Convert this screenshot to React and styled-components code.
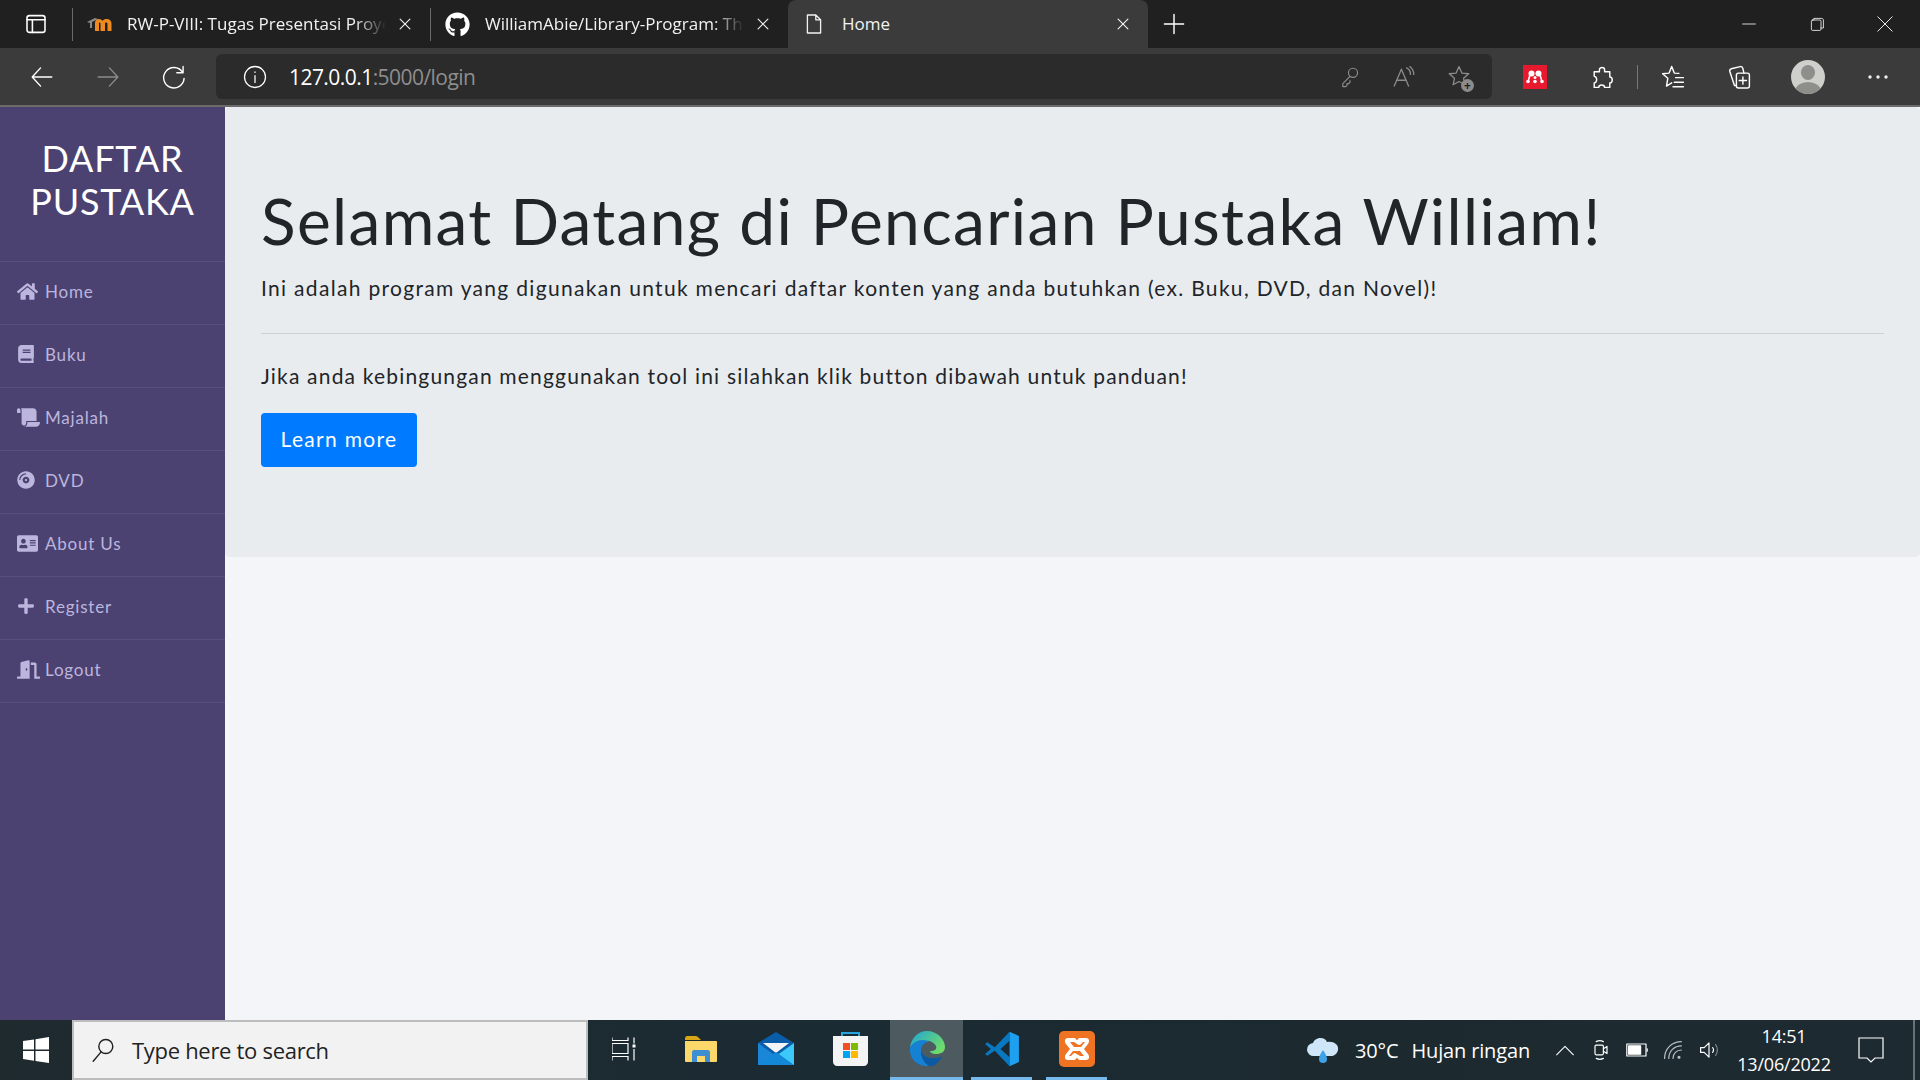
import React from 'react';
import styled, { createGlobalStyle } from 'styled-components';
import {
  FaHome,
  FaBook,
  FaScroll,
  FaCompactDisc,
  FaAddressCard,
  FaPlus,
  FaDoorOpen,
  FaGithub,
} from 'react-icons/fa';

const GlobalStyle = createGlobalStyle`
  html, body {
    margin: 0;
    padding: 0;
    height: 100%;
    overflow: hidden;
    background: #f4f5f9;
  }
  #root {
    height: 100%;
  }
  * {
    box-sizing: border-box;
  }
`;

const UI_FONT = `"Open Sans", "Noto Sans", sans-serif`;
const PAGE_FONT = `Lato, "Open Sans", sans-serif`;

const Stroke = ({ size = 20, width = 1.2, color = 'currentColor', children, ...rest }) => (
  <svg
    width={size}
    height={size}
    viewBox="0 0 20 20"
    fill="none"
    stroke={color}
    strokeWidth={width}
    strokeLinecap="round"
    strokeLinejoin="round"
    {...rest}
  >
    {children}
  </svg>
);

const CloseIcon = ({ size = 14 }) => (
  <Stroke size={size} width={1.6}>
    <path d="M3 3l14 14M17 3L3 17" />
  </Stroke>
);

const MoodleIcon = () => (
  <svg width="26" height="16" viewBox="0 0 26 16">
    <path d="M0 6l8-4 3 1-6 3v6H3V7z" fill="#8a8a8a" />
    <path
      d="M8 15V7c0-2 1-4 4-4 2 0 3 1 3.500 2 1-1.500 2.500-2 4-2 3 0 5 1.500 5 5v7h-4V8c0-1-.5-1.500-1.500-1.500S18 7 18 8v7h-4.500V8c0-1-.5-1.500-1-1.500S12 7 12 8v7z"
      fill="#ee8a1f"
    />
  </svg>
);

const navItems = [
  { label: 'Home', Icon: FaHome, size: 21 },
  { label: 'Buku', Icon: FaBook, size: 18 },
  { label: 'Majalah', Icon: FaScroll, size: 23 },
  { label: 'DVD', Icon: FaCompactDisc, size: 18 },
  { label: 'About Us', Icon: FaAddressCard, size: 21 },
  { label: 'Register', Icon: FaPlus, size: 18 },
  { label: 'Logout', Icon: FaDoorOpen, size: 23 },
];

const App = () => (
  <Screen>
    <GlobalStyle />
    <TabStrip>
      <StripIcon $width={72}>
        <Stroke size={24} width={1.3}>
          <rect x="2.5" y="3" width="15" height="14" rx="2" />
          <path d="M2.5 6.5h15M7 6.5V17" />
        </Stroke>
      </StripIcon>
      <Tab $divider>
        <TabIcon>
          <MoodleIcon />
        </TabIcon>
        <TabTitle>RW-P-VIII: Tugas Presentasi Proyek</TabTitle>
        <TabClose>
          <CloseIcon />
        </TabClose>
      </Tab>
      <Tab $divider>
        <TabIcon>
          <FaGithub size={25} color="#fff" />
        </TabIcon>
        <TabTitle>WilliamAbie/Library-Program: The</TabTitle>
        <TabClose>
          <CloseIcon />
        </TabClose>
      </Tab>
      <Tab $active>
        <TabIcon>
          <Stroke size={24} width={1.1}>
            <path d="M4.5 2.5h7l4 4v11h-11zM11.5 2.5v4h4" />
          </Stroke>
        </TabIcon>
        <TabTitle $plain>Home</TabTitle>
        <TabClose>
          <CloseIcon />
        </TabClose>
      </Tab>
      <NewTab>
        <Stroke size={24} width={1.2}>
          <path d="M10 2v16M2 10h16" />
        </Stroke>
      </NewTab>
      <WindowControls>
        <WindowButton>
          <Stroke size={16} width={1}>
            <path d="M2 10h16" />
          </Stroke>
        </WindowButton>
        <WindowButton>
          <Stroke size={16} width={1}>
            <rect x="3" y="5" width="12" height="13" rx="1.5" />
            <path d="M6 5V3h10c1 0 2 1 2 2v10h-3" />
          </Stroke>
        </WindowButton>
        <WindowButton>
          <Stroke size={18} width={1}>
            <path d="M2 2l16 16M18 2L2 18" />
          </Stroke>
        </WindowButton>
      </WindowControls>
    </TabStrip>

    <Toolbar>
      <NavButton>
        <Stroke size={28} width={1}>
          <path d="M17 10H3M9 3.5L3 10l6 6.500" />
        </Stroke>
      </NavButton>
      <NavButton $muted>
        <Stroke size={28} width={1}>
          <path d="M3 10h14M11 3.5l6 6.500-6 6.500" />
        </Stroke>
      </NavButton>
      <NavButton>
        <Stroke size={28} width={1}>
          <path d="M16 6.500A7.300 7.300 0 1 0 17.200 11M16.500 2.500v4.500H12" />
        </Stroke>
      </NavButton>
      <AddressBar>
        <InfoIcon>
          <Stroke size={28} width={0.9}>
            <circle cx="10" cy="10" r="7.500" />
            <path d="M10 9v5M10 6.300v.4" />
          </Stroke>
        </InfoIcon>
        <Url>
          127.0.0.1<UrlPath>:5000/login</UrlPath>
        </Url>
        <AddressIcons>
          <Stroke size={24} width={1}>
            <circle cx="12.500" cy="6.500" r="3.800" />
            <path d="M10 9.500l-6 6v2.500h2.500l1-1v-1.500h1.500l1-1v-1.500" />
          </Stroke>
          <Stroke size={26} width={1}>
            <path d="M2.500 17L8 4l5.500 13M4.500 12.500h7M12 3c2 1 3 3 3 5M14.500 2c2 1.500 3 3.500 3 6" />
          </Stroke>
          <FavAdd>
            <Stroke size={26} width={1}>
              <path d="M10 2l2.200 5 5.300.5-4 3.500 1 5-4.500-2.500-4.500 2.500 1-5-4-3.500 5.300-.5z" />
            </Stroke>
            <FavBadge>+</FavBadge>
          </FavAdd>
        </AddressIcons>
      </AddressBar>
      <ToolIcons>
        <Mendeley>
          <svg width="24" height="24" viewBox="0 0 24 24" fill="#fff">
            <circle cx="8.500" cy="8.500" r="3" />
            <circle cx="15.500" cy="8.500" r="3" />
            <circle cx="12" cy="12.500" r="1.500" />
            <circle cx="5" cy="16.500" r="1.800" />
            <circle cx="12" cy="16.500" r="1.800" />
            <circle cx="19" cy="16.500" r="1.800" />
            <path d="M6 10l1.500 1-1.500 5H4.500zM18 10l-1.500 1 1.500 5h1.500z" />
          </svg>
        </Mendeley>
        <ToolSlot $width={66} $gap={22}>
          <Stroke size={26} width={1.1}>
            <path d="M8 4.500C8 2 12 2 12 4.500V6h4v4c2.500 0 2.500 4.500 0 4.500V18h-4c0-2.500-4.500-2.500-4.500 0H4v-3.500c2.500 0 2.500-5 0-5V6h4z" />
          </Stroke>
        </ToolSlot>
        <ToolDivider />
        <ToolSlot $width={70}>
          <Stroke size={26} width={1.1}>
            <path d="M9 2l2 5 3.500.2M9 2L7 7l-5 .5 4 3.500-1 6 4-2.500M12 10.500h6M11 14h7M10 17.500h8" />
          </Stroke>
        </ToolSlot>
        <ToolSlot $width={62}>
          <Stroke size={26} width={1.1}>
            <rect x="8" y="7" width="10" height="11.500" rx="1.500" />
            <path d="M13 10v5.500M10.200 12.700h5.600M8 16.500H6.500L3 6c-.3-1 0-2 1-2.300L11 2c1-.2 1.700.5 2 1.500l.8 3.500" />
          </Stroke>
        </ToolSlot>
        <Avatar>
          <AvatarHead />
          <AvatarBody />
        </Avatar>
        <MoreDots>
          <svg width="20" height="4" viewBox="0 0 20 4" fill="#f0f0f0">
            <circle cx="2" cy="2" r="1.700" />
            <circle cx="10" cy="2" r="1.700" />
            <circle cx="18" cy="2" r="1.700" />
          </svg>
        </MoreDots>
      </ToolIcons>
    </Toolbar>

    <Body>
      <Sidebar>
        <Brand>DAFTAR PUSTAKA</Brand>
        <NavList>
          {navItems.map(({ label, Icon, size }) => (
            <NavItem key={label}>
              <NavIcon>
                <Icon size={size} />
              </NavIcon>
              {label}
            </NavItem>
          ))}
        </NavList>
      </Sidebar>
      <Content>
        <Jumbotron>
          <Heading>Selamat Datang di Pencarian Pustaka William!</Heading>
          <Lead>
            Ini adalah program yang digunakan untuk mencari daftar konten yang anda butuhkan (ex. Buku,
            DVD, dan Novel)!
          </Lead>
          <Rule />
          <Hint>Jika anda kebingungan menggunakan tool ini silahkan klik button dibawah untuk panduan!</Hint>
          <LearnMore>Learn more</LearnMore>
        </Jumbotron>
      </Content>
    </Body>

    <Taskbar>
      <StartButton>
        <svg width="26" height="26" viewBox="0 0 26 26" fill="#fff">
          <path d="M0 4l11-1.500V12.500H0zM12.500 2.300L26 0v12.500H12.500zM0 14h11v9.700L0 22zM12.500 14H26v12l-13.500-2z" />
        </svg>
      </StartButton>
      <SearchBox>
        <Stroke size={28} width={1} color="#1f1f1f">
          <circle cx="12" cy="7.500" r="5" />
          <path d="M8.500 11.500L3 18" />
        </Stroke>
        <SearchText>Type here to search</SearchText>
      </SearchBox>
      <TaskSlot $width={72}>
        <svg width="24" height="24" viewBox="0 0 24 24" fill="none" stroke="#fff" strokeWidth="1.200">
          <path d="M0 .5v3h16v-3M0 6.500h16v10H0zM0 23.500v-4h16v4M22 .5v6M22 10v0M22 12v11.500" />
          <rect x="20.500" y="7.500" width="3" height="3" fill="#fff" stroke="none" />
        </svg>
      </TaskSlot>
      <TaskSlot $width={82}>
        <svg width="32" height="26" viewBox="0 0 32 26">
          <path d="M0 3c0-2 1-3 2-3h9c1 0 2 1 3 2l2 2H0z" fill="#d9a416" />
          <path d="M0 5h31c.5 0 1 .5 1 1v19c0 .5-.5 1-1 1H1c-.5 0-1-.5-1-1z" fill="#fbd869" />
          <path d="M7 26V16c0-1 1-2 2-2h14c1 0 2 1 2 2v10h-5v-6h-8v6z" fill="#3d8fd4" />
        </svg>
      </TaskSlot>
      <TaskSlot $width={68}>
        <svg width="36" height="33" viewBox="0 0 36 33">
          <path d="M18 0l18 11v3L18 25 0 14v-3z" fill="#0a5da8" />
          <path d="M5 11h26L18 21z" fill="#f2f4f6" />
          <path d="M0 11l18 13v9H0z" fill="#1a86d8" />
          <path d="M36 11L18 24v9h18z" fill="#3cc8f8" />
          <path d="M0 33l18-13 18 13z" fill="#1488d8" />
        </svg>
      </TaskSlot>
      <TaskSlot $width={80}>
        <svg width="35" height="35" viewBox="0 0 35 35">
          <path d="M9 6V2h17v4" fill="none" stroke="#27a3dd" strokeWidth="2" />
          <path d="M0 5h35v26c0 2-2 4-4 4H4c-2 0-4-2-4-4z" fill="#f4f4f4" />
          <path d="M10 12h7v7h-7z" fill="#f25022" />
          <path d="M18 12h7v7h-7z" fill="#7fba00" />
          <path d="M10 20h7v7h-7z" fill="#00a4ef" />
          <path d="M18 20h7v7h-7z" fill="#ffb900" />
        </svg>
      </TaskSlot>
      <TaskSlot $width={73} $active $underline>
        <svg width="36" height="36" viewBox="0 0 36 36">
          <defs>
            <linearGradient id="edgeTop" x1="0" y1="0" x2="1" y2="0.6">
              <stop offset="0" stopColor="#1ea3d8" />
              <stop offset="1" stopColor="#6fdc6a" />
            </linearGradient>
          </defs>
          <path d="M1 17C2 7 9 0 18 0c10 0 18 8 18 16 0 5-4 7-9 7-3 0-6-1-6-3 5 0 7-2 6-5-2-4-7-6-11-5C9 11 3 13 1 17z" fill="url(#edgeTop)" />
          <path d="M1 17c2-5 7-8 13-8 3 0 5 1 6 2-5 0-8 4-8 9 0 6 3 11 8 15C10 36 0 29 1 17z" fill="#1581d2" />
          <path d="M20 35c-5-3-8-9-8-15 2 5 8 8 14 7 3 0 6-1 7-2-2 5-8 12-13 10z" fill="#0c59a4" />
        </svg>
      </TaskSlot>
      <TaskSlot $width={61} $gap={8} $underline>
        <svg width="36" height="36" viewBox="0 0 100 100">
          <path d="M3 36l6-5 21 14L71 2v25L46 50l25 23v25L30 55 9 69l-6-5 16-14z" fill="#0a78c0" />
          <path d="M71 2l26 12v72L71 98z" fill="#1ea0f0" />
        </svg>
      </TaskSlot>
      <TaskSlot $width={61} $gap={14} $underline>
        <svg width="36" height="36" viewBox="0 0 36 36">
          <rect width="36" height="36" rx="5" fill="#ee7424" />
          <path
            d="M9 7h6c2 0 2 2 3 2s1-2 3-2h6c3 0 4 3 2 6l-4 5 4 5c2 3 1 6-2 6h-6c-2 0-2-2-3-2s-1 2-3 2H9c-3 0-4-3-2-6l4-5-4-5C5 10 6 7 9 7z"
            fill="#fff"
          />
          <path d="M11 11h4c2 1 4 3 6 3l3-3h2l-4 5h-7zM25 25h-4c-2-1-4-3-6-3l-3 3h-2l4-5h7z" fill="#ee7424" />
        </svg>
      </TaskSlot>
      <Tray>
        <svg width="34" height="28" viewBox="0 0 34 28">
          <path d="M8 20a6.500 6.500 0 0 1-1-13C9 1 19 0 21 6c6-1 12 2 11 8-1 4-4 6-7 6z" fill="#cfe6f8" />
          <path d="M17 14c2 3 4 6 4 9a4 4 0 0 1-8 0c0-3 2-6 4-9z" fill="#3fa2e6" />
        </svg>
        <Weather>
          <span>30°C</span>
          <span>Hujan ringan</span>
        </Weather>
        <TrayIcons>
          <Stroke size={24} width={0.9}>
            <path d="M3 14l7-7 7 7" />
          </Stroke>
          <Stroke size={24} width={1}>
            <rect x="5" y="6" width="7" height="8" rx="1" />
            <path d="M12 9l3-2v6l-3-2M6 3c2-1 4-1 6 0M6 17c2 1 4 1 6 0" />
          </Stroke>
          <Stroke size={24} width={1}>
            <rect x="1.500" y="5" width="16" height="10" />
            <rect x="3" y="6.500" width="10" height="7" fill="#fff" />
            <path d="M18.500 9v2" />
          </Stroke>
          <Stroke size={24} width={1} color="#b9c0c4">
            <path d="M3 17C3 9 9 3 17 3M6.500 17c0-6 4.500-10.500 10.500-10.500M10 17c0-4 3-7 7-7" />
            <circle cx="15" cy="16" r="0.800" fill="#fff" />
          </Stroke>
          <Stroke size={24} width={1}>
            <path d="M3 8h3l4-4v12l-4-4H3zM13 8c1 1 1 3 0 4" />
            <path d="M15.500 5.500c2 3 2 6 0 9" stroke="#7d8588" />
          </Stroke>
        </TrayIcons>
        <Clock>
          <span>14:51</span>
          <span>13/06/2022</span>
        </Clock>
        <Notify>
          <svg width="26" height="28" viewBox="0 0 26 28" fill="none" stroke="#fff" strokeWidth="1.200">
            <path d="M1 2h24v20h-8l-4 4-4-4H1z" />
          </svg>
        </Notify>
      </Tray>
    </Taskbar>
  </Screen>
);

export default App;

const Screen = styled.div`
  width: 1920px;
  height: 1080px;
  display: flex;
  flex-direction: column;
  overflow: hidden;
  font-family: ${UI_FONT};
`;

const TabStrip = styled.div`
  height: 48px;
  flex: none;
  display: flex;
  background: #202020;
  color: #fff;
`;

const StripIcon = styled.div`
  width: ${({ $width }) => $width}px;
  display: flex;
  align-items: center;
  justify-content: center;
`;

const Tab = styled.div`
  width: ${({ $active }) => ($active ? 360 : 358)}px;
  height: 48px;
  flex: none;
  display: flex;
  align-items: center;
  position: relative;
  padding: 0 18px 0 14px;
  font-size: 17px;
  color: #f2f2f2;
  background: ${({ $active }) => ($active ? '#3b3b3b' : 'transparent')};
  border-radius: ${({ $active }) => ($active ? '8px 8px 0 0' : '0')};
  border-left: ${({ $divider }) => ($divider ? '1px solid #5a5a5a' : 'none')};
  background-clip: ${({ $divider }) => ($divider ? 'content-box' : 'border-box')};
  border-image: ${({ $divider }) =>
    $divider ? 'linear-gradient(#202020 9px, #6a6a6a 9px, #6a6a6a 40px, #202020 40px) 1' : 'none'};
`;

const TabIcon = styled.div`
  width: 30px;
  flex: none;
  display: flex;
  align-items: center;
  margin-right: 10px;
`;

const TabTitle = styled.div`
  flex: 1;
  min-width: 0;
  padding-bottom: 1px;
  white-space: nowrap;
  overflow: hidden;
  mask-image: ${({ $plain }) =>
    $plain ? 'none' : 'linear-gradient(to right, #000 88%, transparent 100%)'};
`;

const TabClose = styled.div`
  width: 14px;
  height: 14px;
  flex: none;
  margin-left: 12px;
  display: flex;
`;

const NewTab = styled.div`
  width: 44px;
  margin-left: 4px;
  display: flex;
  align-items: center;
  justify-content: center;
`;

const WindowControls = styled.div`
  margin-left: auto;
  display: flex;
  padding-right: 1px;
`;

const WindowButton = styled.div`
  width: 68px;
  display: flex;
  align-items: center;
  justify-content: center;
`;

const Toolbar = styled.div`
  height: 59px;
  flex: none;
  display: flex;
  align-items: flex-start;
  background: #3b3b3b;
  border-bottom: 2px solid #6b6b6b;
  color: #fff;
  padding: 6px 0 0 9px;
`;

const NavButton = styled.div`
  width: 66px;
  height: 45px;
  flex: none;
  display: flex;
  align-items: center;
  justify-content: center;
  color: ${({ $muted }) => ($muted ? '#8c8c8c' : '#fff')};
`;

const AddressBar = styled.div`
  width: 1276px;
  height: 45px;
  margin-left: 9px;
  flex: none;
  display: flex;
  align-items: center;
  background: #2b2b2b;
  border-radius: 6px;
  padding: 0 20px 0 25px;
`;

const InfoIcon = styled.div`
  display: flex;
  margin-right: 20px;
`;

const Url = styled.div`
  font-size: 21px;
  letter-spacing: -0.55px;
  color: #fff;
`;

const UrlPath = styled.span`
  color: #8e8e8e;
`;

const AddressIcons = styled.div`
  margin-left: auto;
  display: flex;
  align-items: center;
  gap: 29px;
  color: #8c8c8c;
`;

const FavAdd = styled.div`
  position: relative;
  display: flex;
`;

const FavBadge = styled.div`
  position: absolute;
  right: -2px;
  bottom: -2px;
  width: 13px;
  height: 13px;
  border-radius: 50%;
  background: #8c8c8c;
  color: #222;
  font-size: 12px;
  line-height: 13px;
  font-weight: 700;
  text-align: center;
`;

const ToolIcons = styled.div`
  flex: 1;
  height: 45px;
  display: flex;
  align-items: center;
  padding-left: 31px;
`;

const Mendeley = styled.div`
  width: 24px;
  height: 24px;
  flex: none;
  display: flex;
  background: #e6192e;
`;

const ToolSlot = styled.div`
  width: ${({ $width }) => $width}px;
  margin-left: ${({ $gap }) => $gap || 0}px;
  flex: none;
  display: flex;
  justify-content: center;
  align-items: center;
`;

const ToolDivider = styled.div`
  width: 1px;
  height: 24px;
  margin-left: 2px;
  flex: none;
  background: #777;
`;

const Avatar = styled.div`
  width: 34px;
  height: 34px;
  margin-left: 21px;
  flex: none;
  border-radius: 50%;
  background: #cfcfcb;
  position: relative;
  overflow: hidden;
`;

const AvatarHead = styled.div`
  position: absolute;
  left: 10px;
  top: 5px;
  width: 14px;
  height: 15px;
  border-radius: 50%;
  background: #8e8e8a;
`;

const AvatarBody = styled.div`
  position: absolute;
  left: 4px;
  top: 22px;
  width: 26px;
  height: 18px;
  border-radius: 50%;
  background: #8e8e8a;
`;

const MoreDots = styled.div`
  width: 34px;
  margin-left: 36px;
  display: flex;
  justify-content: center;
`;

const Body = styled.div`
  flex: 1;
  min-height: 0;
  display: flex;
  background: #f4f5f9;
`;

const Sidebar = styled.nav`
  width: 225px;
  flex: none;
  background: #4b4272;
`;

const Brand = styled.div`
  height: 154px;
  padding: 30px 20px 0;
  font-family: ${PAGE_FONT};
  font-size: 36px;
  line-height: 43px;
  letter-spacing: 0.8px;
  text-align: center;
  color: #fff;
`;

const NavList = styled.ul`
  list-style: none;
  margin: 0;
  padding: 0;
`;

const NavItem = styled.li`
  height: 63px;
  display: flex;
  align-items: center;
  padding: 0 0 4px 17px;
  border-top: 1px solid #57507f;
  font-family: ${PAGE_FONT};
  font-size: 17px;
  letter-spacing: 0.8px;
  color: #bcb5dd;

  &:last-child {
    height: 64px;
    border-bottom: 1px solid #57507f;
  }
`;

const NavIcon = styled.span`
  width: 28px;
  display: flex;
  align-items: center;
`;

const Content = styled.main`
  flex: 1;
  min-width: 0;
`;

const Jumbotron = styled.section`
  height: 450px;
  padding: 78px 36px 0;
  background: #e9ecef;
  border-radius: 5px;
  color: #212529;
  font-family: ${PAGE_FONT};
`;

const Heading = styled.h1`
  margin: 0;
  font-size: 64px;
  line-height: 72px;
  font-weight: 400;
  letter-spacing: 1.35px;
  white-space: nowrap;
`;

const Lead = styled.p`
  margin: 15px 0 0;
  font-size: 21px;
  line-height: 32px;
  letter-spacing: 1.31px;
`;

const Rule = styled.hr`
  margin: 29px 0 0;
  border: 0;
  border-top: 1px solid #ced2d6;
`;

const Hint = styled.p`
  margin: 26px 0 0;
  font-size: 21px;
  line-height: 32px;
  letter-spacing: 1.18px;
`;

const LearnMore = styled.button`
  display: block;
  width: 156px;
  height: 54px;
  margin-top: 21px;
  padding: 0 0 3px;
  border: 0;
  border-radius: 4px;
  background: #007bff;
  color: #fff;
  font-family: ${PAGE_FONT};
  font-size: 21px;
  letter-spacing: 1.3px;
`;

const Taskbar = styled.footer`
  height: 60px;
  flex: none;
  display: flex;
  background: linear-gradient(90deg, #1f2a2f 0%, #1b2b33 45%, #1c2a30 70%, #1e2a31 100%);
  color: #fff;
`;

const StartButton = styled.div`
  width: 72px;
  flex: none;
  display: flex;
  align-items: center;
  justify-content: center;
`;

const SearchBox = styled.div`
  width: 516px;
  flex: none;
  display: flex;
  align-items: center;
  gap: 15px;
  padding-left: 15px;
  background: #f2f2f2;
  border: 2px solid #bdbdbd;
`;

const SearchText = styled.span`
  font-size: 22px;
  letter-spacing: -0.3px;
  color: #222;
`;

const TaskSlot = styled.div`
  width: ${({ $width }) => $width}px;
  margin-left: ${({ $gap }) => $gap || 0}px;
  flex: none;
  display: flex;
  align-items: center;
  justify-content: center;
  background: ${({ $active }) => ($active ? '#4d5a60' : 'transparent')};
  border-bottom: ${({ $underline }) => ($underline ? '3px solid #76b9ed' : '3px solid transparent')};
`;

const Tray = styled.div`
  margin: 0 5px 0 auto;
  display: flex;
  align-items: center;
  padding-right: 9px;
  border-right: 2px solid #6a7175;
`;

const Weather = styled.div`
  margin-left: 15px;
  display: flex;
  gap: 13px;
  font-size: 20px;
  letter-spacing: -0.15px;
`;

const TrayIcons = styled.div`
  margin-left: 23px;
  display: flex;
  align-items: center;
  gap: 12px;
`;

const Clock = styled.div`
  width: 108px;
  margin-left: 9px;
  display: flex;
  flex-direction: column;
  align-items: center;
  gap: 2px;
  font-size: 18px;
  line-height: 26px;
  letter-spacing: -0.2px;
`;

const Notify = styled.div`
  width: 66px;
  display: flex;
  justify-content: center;
`;
